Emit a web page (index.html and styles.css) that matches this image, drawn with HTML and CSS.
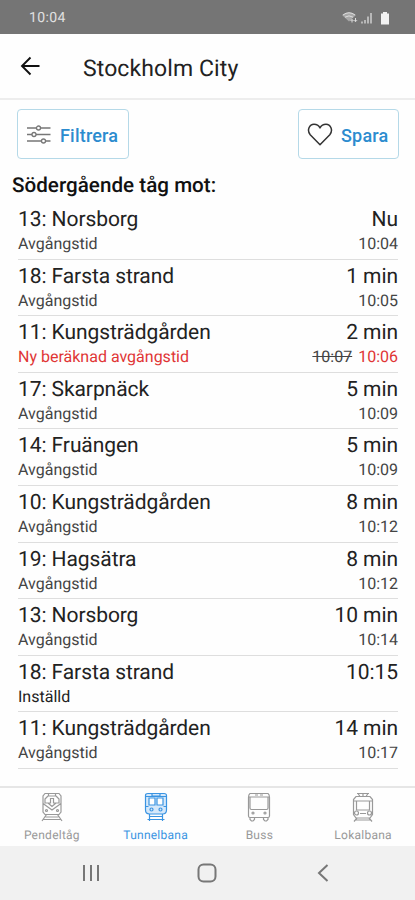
FILE: index.html
```html
<!DOCTYPE html>
<html lang="sv">
<head>
<meta charset="utf-8">
<title>Stockholm City</title>
<link rel="stylesheet" href="styles.css">
</head>
<body>
<div class="status">
  <span class="clock">10:04</span>
  <svg class="signals" width="50" height="14" viewBox="0 0 50 14">
    <path d="M0 4Q7-1.500 14 4L7 10.500Z" fill="#a8a8a8"/>
    <path d="M1 4Q7-.500 13 4M3 6.200Q7 3.500 11 6.200" fill="none" stroke="#ddd" stroke-width="1"/>
    <path d="M10 11.500v-3M8.500 10L10 8.500l1.500 1.500M13.500 7v3.500M12 9.200L13.500 10.700l1.500-1.500" fill="none" stroke="#ddd" stroke-width="1"/>
    <path d="M20 12.500v-2M23 12.500V9M26 12.500V5.500M29 12.500V2" stroke="#b8b8b8" stroke-width="2"/>
    <path d="M39 2.500h2V1h4v1.500h2V13.500H39Z" fill="#f2f2f2"/>
  </svg>
</div>
<header class="appbar">
  <svg class="back" width="20" height="20" viewBox="0 0 20 20"><path d="M19.500 10H2M10.500 1.500L2 10l8.500 8.500" fill="none" stroke="#111" stroke-width="1.900"/></svg>
  <h1>Stockholm City</h1>
</header>
<main>
  <div class="actions">
    <button class="btn filter">
      <svg width="24" height="20" viewBox="0 0 24 20" fill="none" stroke="#777" stroke-width="1.300"><path d="M0 3h9.500M13.500 3h10M0 9.500h5M9 9.500h14.500M0 16h14.500M18.500 16h5"/><circle cx="11.500" cy="3" r="2"/><circle cx="7" cy="9.500" r="2"/><circle cx="16.500" cy="16" r="2"/></svg>
      <span>Filtrera</span>
    </button>
    <button class="btn save">
      <svg width="26" height="24" viewBox="0 0 26 24"><path d="M13 21.800L3.200 11.800C-.500 7 2.500 1.300 7 1.300c3 0 5 1.700 6 3.600 1-1.900 3-3.600 6-3.600 4.500 0 7.500 5.700 3.800 10.500Z" fill="none" stroke="#333" stroke-width="1.500" stroke-linejoin="round"/></svg>
      <span>Spara</span>
    </button>
  </div>
  <h2>Södergående tåg mot:</h2>
  <ul class="list">
    <li><div class="top"><span>13: Norsborg</span><span>Nu</span></div><div class="sub"><span>Avgångstid</span><span>10:04</span></div></li>
    <li><div class="top"><span>18: Farsta strand</span><span>1 min</span></div><div class="sub"><span>Avgångstid</span><span>10:05</span></div></li>
    <li><div class="top"><span>11: Kungsträdgården</span><span>2 min</span></div><div class="sub late"><span>Ny beräknad avgångstid</span><span><s>10:07</s> 10:06</span></div></li>
    <li><div class="top"><span>17: Skarpnäck</span><span>5 min</span></div><div class="sub"><span>Avgångstid</span><span>10:09</span></div></li>
    <li><div class="top"><span>14: Fruängen</span><span>5 min</span></div><div class="sub"><span>Avgångstid</span><span>10:09</span></div></li>
    <li><div class="top"><span>10: Kungsträdgården</span><span>8 min</span></div><div class="sub"><span>Avgångstid</span><span>10:12</span></div></li>
    <li><div class="top"><span>19: Hagsätra</span><span>8 min</span></div><div class="sub"><span>Avgångstid</span><span>10:12</span></div></li>
    <li><div class="top"><span>13: Norsborg</span><span>10 min</span></div><div class="sub"><span>Avgångstid</span><span>10:14</span></div></li>
    <li><div class="top"><span>18: Farsta strand</span><span>10:15</span></div><div class="sub cancelled"><span>Inställd</span></div></li>
    <li><div class="top"><span>11: Kungsträdgården</span><span>14 min</span></div><div class="sub"><span>Avgångstid</span><span>10:17</span></div></li>
  </ul>
</main>
<nav class="tabs">
  <div class="tab">
    <svg width="24" height="30" viewBox="0 0 24 30" fill="none" stroke="currentColor" stroke-width="1.200"><path d="M5 1.500h14l2 2.500v16l-2 2.500H5L3 20V4ZM8.500 1.500V4h7V1.500M8 4L5 7v4h5.500V6.500h3V11H19V7l-3-3M3 11.500L12 18l9-6.500M8 11l4 3.500 4-3.500"/><circle cx="6.500" cy="18.500" r="1"/><circle cx="17.500" cy="18.500" r="1"/><path d="M6.500 22.500L2 29M17.500 22.500L22 29M5.500 25h13M3.500 27.500h17"/></svg>
    <span>Pendeltåg</span>
  </div>
  <div class="tab active">
    <svg width="24" height="30" viewBox="0 0 24 30" fill="none" stroke="currentColor" stroke-width="1.200"><path d="M4 1.500h16q2.500 0 2.500 2V18q0 4-4 4h-13q-4 0-4-4V3.500q0-2 2.500-2Z" fill="#d5e8fa"/><path d="M8 1.500v2.500h8V1.500M1.500 4.500h21"/><path d="M5 6h6v7H5ZM13 6h6v7h-6Z" fill="#fff"/><path d="M1.500 14.500h3M19.500 14.500h3"/><circle cx="7.500" cy="17.500" r="1.500"/><circle cx="16.500" cy="17.500" r="1.500"/><path d="M5.500 22v7M18.500 22v7M5.500 24.500h13M3.500 27.500h17"/></svg>
    <span>Tunnelbana</span>
  </div>
  <div class="tab">
    <svg width="24" height="30" viewBox="0 0 24 30" fill="none" stroke="currentColor" stroke-width="1.200"><path d="M3 1.500h18q1.500 1 1.500 4v18.500q0 1.500-1.500 1.500H3q-1.500 0-1.500-1.500V5.500q0-3 1.500-4ZM1.500 5h21M3 5v11q0 1.500 1.500 1.500h15q1.500 0 1.500-1.500V5M8 3h3M13 3h3"/><circle cx="6" cy="21" r="1"/><circle cx="18" cy="21" r="1"/><path d="M3 25.500v2l1.500 1.500H6L7.500 27.500v-2M16.500 25.500v2L18 29h1.500l1.500-1.500v-2"/></svg>
    <span>Buss</span>
  </div>
  <div class="tab">
    <svg width="24" height="30" viewBox="0 0 24 30" fill="none" stroke="currentColor" stroke-width="1.200"><path d="M6 1.500h12M7 1.500L9 4.500M17 1.500l-2 3M12 1.500v3M5 4.500h14l2.500 3v15L19 26H5l-2.500-3.500v-15ZM5.500 9h13v9h-13ZM2.500 9L5.500 9M18.500 9h3M9 21.500h6"/><circle cx="5.500" cy="21" r="2"/><circle cx="18.500" cy="21" r="2"/><path d="M6 26l-3 3.500M18 26l3 3.500M5 28h14"/></svg>
    <span>Lokalbana</span>
  </div>
</nav>
<div class="sysnav">
  <svg width="20" height="20" viewBox="0 0 20 20"><path d="M3 2v16M10 2v16M17 2v16" stroke="#777" stroke-width="2"/></svg>
  <svg width="20" height="20" viewBox="0 0 20 20"><rect x="1.500" y="1.500" width="17" height="17" rx="5" fill="none" stroke="#777" stroke-width="2"/></svg>
  <svg width="20" height="20" viewBox="0 0 20 20"><path d="M14.500 2L6 10l8.500 8" fill="none" stroke="#777" stroke-width="2"/></svg>
</div>
</body>
</html>
```
FILE: styles.css
```css
* { box-sizing: border-box; }
body {
  margin: 0;
  width: 415px;
  height: 900px;
  display: flex;
  flex-direction: column;
  overflow: hidden;
  background: #fefefe;
  color: #222;
  font-family: Roboto, "Liberation Sans", sans-serif;
  text-rendering: geometricPrecision;
}
svg { display: block; flex: none; }
.status {
  height: 34px;
  padding: 1px 23px 0 29px;
  display: flex;
  align-items: center;
  justify-content: space-between;
  background: #757575;
  color: #e0e0e0;
}
.clock { font-size: 14px; letter-spacing: 0.4px; }
.appbar {
  height: 66px;
  padding: 0 20px;
  display: flex;
  align-items: center;
  gap: 43px;
  border-bottom: 2px solid #ededed;
}
h1 { margin: 4px 0 0; font-size: 23px; font-weight: 400; letter-spacing: 0.1px; }
main { flex: 1; min-height: 0; }
.actions { display: flex; justify-content: space-between; padding: 9px 16px 0 17px; }
.btn {
  height: 50px;
  padding: 2px 0 0;
  display: flex;
  align-items: center;
  background: #fff;
  border: 1.5px solid #b5d9e8;
  border-radius: 4px;
  font: 500 18px Roboto, "Liberation Sans", sans-serif;
  letter-spacing: 0.2px;
  color: #2c8ccf;
}
.filter { width: 112px; padding-left: 9px; gap: 9px; }
.save { width: 101px; padding-left: 8px; gap: 8px; }
h2 { margin: 13px 0 0 12px; font-size: 20.6px; line-height: 28px; font-weight: 500; letter-spacing: 0.03px; color: #111; }
.list { margin: 3px 17px 0 18px; padding: 0; list-style: none; }
.list li { height: 56.6px; padding-top: 4px; border-bottom: 1px solid #dedede; }
.top, .sub { display: flex; justify-content: space-between; }
.top { font-size: 21px; line-height: 26px; letter-spacing: -0.08px; }
.sub { font-size: 16px; line-height: 22px; color: #444; }
.late { color: #e03535; }
.late s { margin-right: 2px; color: #444; }
.cancelled { color: #222; }
.tabs {
  height: 60px;
  padding-top: 4px;
  display: grid;
  grid-template-columns: repeat(4, 1fr);
  border-top: 2px solid #e6e6e6;
  color: #999;
}
.tab { display: flex; flex-direction: column; align-items: center; gap: 5px; font-size: 12px; line-height: 16px; letter-spacing: 0.25px; }
.active { color: #3a94e2; }
.sysnav {
  height: 54px;
  padding: 0 82px 0 81px;
  display: flex;
  align-items: center;
  justify-content: space-between;
  background: #f1f1f1;
}
```
